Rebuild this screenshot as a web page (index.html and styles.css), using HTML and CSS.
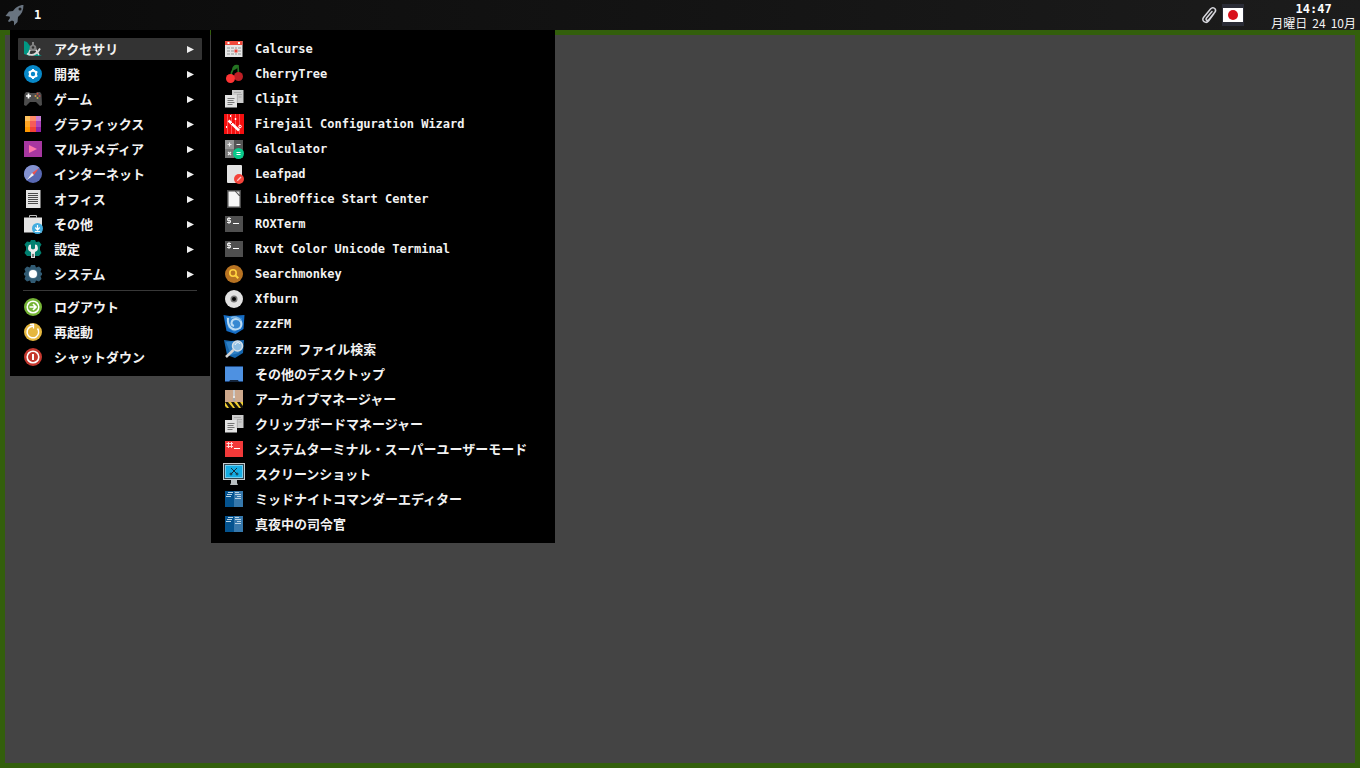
FILE: index.html
```html
<!DOCTYPE html>
<html lang="ja">
<head>
<meta charset="utf-8">
<title>デスクトップ</title>
<link rel="stylesheet" href="styles.css">
</head>
<body>
<svg class="sprites" aria-hidden="true">
  <defs>
    <symbol id="arrow" viewBox="0 0 7 7"><path d="M0 0L7 3.5L0 7Z" fill="#eee"/></symbol>
    <symbol id="clip" viewBox="0 0 22 22">
      <path d="M9 2h11.500v13H9z" fill="#ccc"/><path d="M11 4.500h7M14 6.500h5M15.500 9h3" stroke="#aaa"/>
      <path d="M2 7h12v12.500H2z" fill="#e2e2e2"/><path d="M14.300 7v8" stroke="#999" stroke-width=".6"/>
      <path d="M4.500 10.500h7M4.500 12.500h6M4.500 14.500h7M4.500 16.500h5" stroke="#777"/>
    </symbol>
    <symbol id="term" viewBox="0 0 22 22">
      <path d="M2 3h18v16H2z" fill="#4f4f4f"/>
      <path d="M8 5.500H4.500v2H7.500v2H4M6 4v7" fill="none" stroke="#eee"/><path d="M10 10.500h6" stroke="#fff"/>
    </symbol>
    <symbol id="book" viewBox="0 0 22 22">
      <path d="M2 3h9v16H2z" fill="#04538f"/><path d="M11 3h9v16h-9z" fill="#3678ac"/>
      <path d="M5 4.500h5M4 6.500h5M3 8.500h5M12 4.500h4M12 6.500h6M14 8.500h4M12 10.500h6" stroke="#b7d2e4" stroke-width="1.200"/>
    </symbol>
  </defs>
</svg>

<header class="panel">
  <div class="panel-left">
    <button class="launcher" aria-label="メニュー">
      <svg viewBox="0 0 22 22" width="22" height="22"><path d="M19.500 1C15 1 11.500 3.500 9 7L5 7.500 1.500 12l4 .500.500 1.500-2 3 1 1 3-1.500 2 1 0 4 3.500-3.500.500-5C17.500 10.500 19.500 6.500 19.500 1Z" fill="#697480"/><circle cx="16" cy="5" r="1.500" fill="#161616"/></svg>
    </button>
    <button class="workspace">1</button>
  </div>
  <div class="panel-right">
    <button class="tray" aria-label="クリップボード">
      <svg viewBox="0 0 18 22" width="18" height="22"><g fill="none" stroke="#d6d6dc" stroke-width="1.500" stroke-linecap="round"><path d="M14 9.500L8.500 17C6 20 1 17 3.500 13.500L10.500 5C13 2 17 5 15 8L9 15.500C7.500 17.500 5 16 6.500 14L12 7.500"/></g></svg>
    </button>
    <button class="flag" aria-label="日本語">
      <svg viewBox="0 0 22 22" width="22" height="22"><path d="M1 4h20v14H1z" fill="#fff"/><circle cx="11" cy="11" r="5" fill="#d8101b"/></svg>
    </button>
    <div class="clock">
      <time class="time">14:47</time>
      <div class="date"><span>月曜日</span><span>24</span><span>10月</span></div>
    </div>
  </div>
</header>

<main class="desktop">
  <nav class="menus" aria-label="アプリケーション">
    <div class="menu root">
      <button class="item active"><svg class="icon" viewBox="0 0 22 22"><path d="M2 3l3 1 3 4v10l-6-2z" fill="#009783"/><path d="M13 15l7 3h-8z" fill="#009783"/><path d="M11 4v4" stroke="#858585" stroke-width="2"/><path d="M8 8l3-2 3 2 1 5H7z" fill="#828282"/><circle cx="11" cy="9.500" r="1.200" fill="#303030"/><path d="M8 12l-2 5M14 12l3 5" stroke="#ddd" stroke-width="1.500"/><path d="M5 15.500c5 3 10 1 13-5" fill="none" stroke="#d8d8d8" stroke-width="1.700"/></svg><span class="label">アクセサリ</span><svg class="arrow"><use href="#arrow"/></svg></button>
      <button class="item"><svg class="icon" viewBox="0 0 22 22"><circle cx="11" cy="11" r="9" fill="#0788c8"/><circle cx="11" cy="11" r="3.200" fill="none" stroke="#fff" stroke-width="2"/><path d="M11 6v2M11 14v2M6.700 8.500l1.500 1M13.800 12.500l1.500 1M6.700 13.500l1.500-1M13.800 9.500l1.500-1" stroke="#fff" stroke-width="2"/></svg><span class="label">開発</span><svg class="arrow"><use href="#arrow"/></svg></button>
      <button class="item"><svg class="icon" viewBox="0 0 22 22"><path d="M4 4h3l1 1h6l1-1h3l1.500 2L20 17l-2 1-4-4H8l-4 4-2-1L2.500 6z" fill="#4d4d4d"/><path d="M4 8h5M6.500 5.500v5" stroke="#fff" stroke-width="1.700"/><circle cx="15.500" cy="5.800" r="1" fill="#c95040"/><circle cx="13.500" cy="8" r="1" fill="#d99b45"/><circle cx="17.500" cy="8" r="1" fill="#c94848"/><circle cx="15.500" cy="10" r="1" fill="#b9b34b"/></svg><span class="label">ゲーム</span><svg class="arrow"><use href="#arrow"/></svg></button>
      <button class="item"><svg class="icon" viewBox="0 0 22 22"><path d="M3 3h5v5H3z" fill="#ffc15e"/><path d="M3 8h5v6H3z" fill="#ffa523"/><path d="M3 14h5v5H3z" fill="#ff9800"/><path d="M8 3h6v5H8z" fill="#ff8b68"/><path d="M8 8h6v6H8z" fill="#f55c58"/><path d="M8 14h6v5H8z" fill="#f44336"/><path d="M14 3h5v5h-5z" fill="#c880d4"/><path d="M14 8h5v6h-5z" fill="#ac45bc"/><path d="M14 14h5v5h-5z" fill="#9423a8"/></svg><span class="label">グラフィックス</span><svg class="arrow"><use href="#arrow"/></svg></button>
      <button class="item"><svg class="icon" viewBox="0 0 22 22"><path d="M2 3h18v16H2z" fill="#a737a0"/><path d="M7 7l8 4-8 4z" fill="#ff77aa"/></svg><span class="label">マルチメディア</span><svg class="arrow"><use href="#arrow"/></svg></button>
      <button class="item"><svg class="icon" viewBox="0 0 22 22"><circle cx="11" cy="11" r="9" fill="#5868b3"/><path d="M17.400 4.600A9 9 0 0 0 4.600 17.400Z" fill="#8492d0"/><path d="M17 5l-5 7-2-2z" fill="#ef5350"/><path d="M5 17l5-7 2 2z" fill="#eee"/></svg><span class="label">インターネット</span><svg class="arrow"><use href="#arrow"/></svg></button>
      <button class="item"><svg class="icon" viewBox="0 0 22 22"><path d="M4 2h14.500v18H4z" fill="#e4e4e4"/><path d="M6 5.500h10M6 7.500h10M6 9.500h10M6 11.500h10M6 13.500h10M6 15.500h10" stroke="#4c4c4c"/></svg><span class="label">オフィス</span><svg class="arrow"><use href="#arrow"/></svg></button>
      <button class="item"><svg class="icon" viewBox="0 0 22 22"><path d="M7.500 4.500V2.500h7v2" fill="none" stroke="#bbb"/><path d="M2 4.500h18v15H2z" fill="#e4e4e4"/><circle cx="15.500" cy="15.500" r="5.500" fill="#43addf"/><path d="M15.500 12v4M13.300 14.500l2.200 2.500 2.200-2.500M12.800 18.500h5.400" fill="none" stroke="#fff" stroke-width="1.200"/></svg><span class="label">その他</span><svg class="arrow"><use href="#arrow"/></svg></button>
      <button class="item"><svg class="icon" viewBox="0 0 22 22"><path d="M9 2h4l1 2 3-.5 2.500 3L18 9v3l1.500 3-2.500 3H5l-2.500-3L4 12V9L2.500 6.500l2.500-3 3 .5z" fill="#008070"/><path d="M7 7c-2 4-.500 6 2 7v4h4v-4c2.500-1 4-3 2-7l-2-.500v4L11 11.500 9 10.500v-4z" fill="#eee"/><path d="M9 15h4v5H9z" fill="#ddd"/><path d="M10 16h2v3h-2z" fill="#777"/></svg><span class="label">設定</span><svg class="arrow"><use href="#arrow"/></svg></button>
      <button class="item"><svg class="icon" viewBox="0 0 22 22"><path d="M9 2h4l1 2.500 3-1L19.500 6 18.500 9l1.500 1v2l-1.500 1 1 3-2.500 2.500-3-1L13 20H9l-1-2.500-3 1L2.500 16l1-3L2 12v-2l1.500-1-1-3L5 3.500l3 1z" fill="#315b73"/><circle cx="11" cy="11" r="4.800" fill="#547890"/><circle cx="11" cy="11" r="4" fill="#fff"/></svg><span class="label">システム</span><svg class="arrow"><use href="#arrow"/></svg></button>
      <hr class="rule">
      <button class="item"><svg class="icon" viewBox="0 0 22 22"><circle cx="11" cy="11" r="9" fill="#76b536"/><circle cx="11" cy="11" r="5.800" fill="none" stroke="#fff" stroke-width="1.500"/><path d="M7.500 11h6M11 8l3 3-3 3" fill="none" stroke="#fff" stroke-width="1.700"/></svg><span class="label">ログアウト</span></button>
      <button class="item"><svg class="icon" viewBox="0 0 22 22"><circle cx="11" cy="11" r="9" fill="#e5b73f"/><path d="M15.500 7.500A5.800 5.800 0 1 1 8 6L11 5" fill="none" stroke="#fff" stroke-width="1.500"/><path d="M8 3.500h3.500v4" fill="none" stroke="#fff" stroke-width="1.300"/></svg><span class="label">再起動</span></button>
      <button class="item"><svg class="icon" viewBox="0 0 22 22"><circle cx="11" cy="11" r="9" fill="#c5382f"/><circle cx="11" cy="11" r="5.800" fill="none" stroke="#fff" stroke-width="1.600"/><path d="M11 8v6" stroke="#fff" stroke-width="2"/></svg><span class="label">シャットダウン</span></button>
    </div>

    <div class="menu sub">
      <button class="item"><svg class="icon" viewBox="0 0 22 22"><path d="M2 3h17.500v16H2z" fill="#e6e6e6"/><path d="M2 3h17.500v4H2z" fill="#f04a3c"/><path d="M4.500 4h2v2h-2zM15 4h2v2h-2z" fill="#fff"/><path d="M4 9h3v2H4zM8 9h3v2H8zM12 9h2v2h-2zM15 9h3v2h-3zM4 12h3v2H4zM8 12h3v2H8zM15 12h3v2h-3zM4 15h3v2H4zM8 15h3v2H8zM12 15h2v2h-2zM15 15h3v2h-3z" fill="#bdbdbd"/><path d="M11.500 11.500h3v3h-3z" fill="#ed4238"/></svg><span class="label mono">Calcurse</span></button>
      <button class="item"><svg class="icon" viewBox="0 0 22 22"><path d="M8 13c0-5 3-9 7-10 0 3 1 6 0 9" fill="none" stroke="#247422" stroke-width="1.700"/><path d="M9 7c0-4 3-6 6-5 0 3-2 5-6 5z" fill="#247422"/><circle cx="15.500" cy="13.500" r="4.500" fill="#bd1f25"/><circle cx="7.500" cy="15.500" r="4.500" fill="#ff3434"/></svg><span class="label mono">CherryTree</span></button>
      <button class="item"><svg class="icon"><use href="#clip"/></svg><span class="label mono">ClipIt</span></button>
      <button class="item"><svg class="icon" viewBox="0 0 22 22"><path d="M1 1h20v20H1z" fill="#f40f0f"/><path d="M4.500 1v20M8.500 1v20M12.500 1v20M16.500 1v20" stroke="#ff7373" stroke-width=".7"/><path d="M5.500 7.500l10.500 10" stroke="#fff" stroke-width="2.500"/><path d="M8 11l2.500-2.500" stroke="#f40f0f"/><circle cx="17" cy="13.500" r="1.300" fill="none" stroke="#fff"/><path d="M7.500 2v2M12.500 5v2M11.500 6h2M3.500 13v2" stroke="#fff"/></svg><span class="label mono">Firejail Configuration Wizard</span></button>
      <button class="item"><svg class="icon" viewBox="0 0 22 22"><path d="M2 2h9v9H2z" fill="#969696"/><path d="M11 2h9v9h-9z" fill="#555"/><path d="M2 11h9v9H2z" fill="#777"/><path d="M11 11h9v9h-9z" fill="#444"/><path d="M4.500 6.500h4M6.500 4.500v4M13.500 6.500h4M5 14l3 3M8 14l-3 3" stroke="#eee" stroke-width="1.200"/><circle cx="15.500" cy="15.500" r="5.500" fill="#08c98a"/><path d="M13.500 14.500h4M13.500 16.500h4" stroke="#fff"/></svg><span class="label mono">Galculator</span></button>
      <button class="item"><svg class="icon" viewBox="0 0 22 22"><rect x="4" y="2" width="15" height="18" rx="1" fill="#e4e4e4"/><circle cx="16" cy="16" r="5" fill="#f4433a"/><path d="M13.500 18.500l1-2 3-3 1 1-3 3z" fill="#ffc8c4"/></svg><span class="label mono">Leafpad</span></button>
      <button class="item"><svg class="icon" viewBox="0 0 22 22"><path d="M4 2h14v18H4z" fill="#4b4b4b"/><path d="M5.500 3.500H12l4.500 5v10h-11z" fill="#f6f6f6"/><path d="M13 3.500h3.500V7z" fill="#ddd"/></svg><span class="label mono">LibreOffice Start Center</span></button>
      <button class="item"><svg class="icon"><use href="#term"/></svg><span class="label mono">ROXTerm</span></button>
      <button class="item"><svg class="icon"><use href="#term"/></svg><span class="label mono">Rxvt Color Unicode Terminal</span></button>
      <button class="item"><svg class="icon" viewBox="0 0 22 22"><circle cx="11" cy="11" r="9" fill="#b87322"/><circle cx="10" cy="10" r="3.200" fill="none" stroke="#ffd23f" stroke-width="1.600"/><path d="M12.300 12.300l3 3" stroke="#ffd23f" stroke-width="2"/></svg><span class="label mono">Searchmonkey</span></button>
      <button class="item"><svg class="icon" viewBox="0 0 22 22"><circle cx="11" cy="11" r="9" fill="#e2e2e2"/><circle cx="11" cy="11" r="3.500" fill="#777"/><circle cx="11" cy="11" r="2" fill="#050505"/></svg><span class="label mono">Xfburn</span></button>
      <button class="item"><svg class="icon" viewBox="0 0 22 22"><path d="M.500 2l6 1L21.500 2l-1 14-8 5-9-3z" fill="#156cc4"/><path d="M3 4l8-1 8 2-1 10-7 4-6-4z" fill="#3688d2"/><path d="M5 5c-1 9 5 14 12 10 3-4 1-9-4-9-5 0-6 6-2 7" fill="none" stroke="#bcdcf4" stroke-width="2"/><path d="M8 5c3-2 8-1 10 3" fill="none" stroke="#82b9e6" stroke-width="1.500"/></svg><span class="label mono">zzzFM</span></button>
      <button class="item"><svg class="icon" viewBox="0 0 22 22"><path d="M1 2l7 1 13-1-1 13-8 5-8-3z" fill="#1565ac"/><path d="M3 4l8-1 7 2-2 10-8 2z" fill="#2e7fc4"/><circle cx="14.500" cy="8" r="5" fill="#8fbfe3" stroke="#d5dfe7" stroke-width="1.500"/><path d="M12 7c1-3 4-3 5-1" fill="none" stroke="#f7fbff"/><path d="M10.500 12L3 19" stroke="#d5d5d5" stroke-width="2.500"/></svg><span class="label"><span class="mono">zzzFM </span>ファイル検索</span></button>
      <button class="item"><svg class="icon" viewBox="0 0 22 22"><path d="M2 3h18v16H2z" fill="#4e91e1"/><path d="M2 3h18v1H2zM2 18h18v1H2z" fill="#1d477f"/><path d="M7 17h8l1 2H6z" fill="#14243a"/></svg><span class="label">その他のデスクトップ</span></button>
      <button class="item"><svg class="icon" viewBox="0 0 22 22"><path d="M2 2h18v12H2z" fill="#cda88c"/><path d="M2 14h18v6H2z" fill="#f0ce30"/><path d="M2 14h3l5 6H6zM8 14h3l5 6h-4zM14 14h3l3 4v2h-2zM2 18l2 2H2z" fill="#15130e"/><path d="M11 2v9" stroke="#e8e8e8" stroke-width="2"/><path d="M10 3h2M10 5h2M10 7h2" stroke="#999" stroke-width=".7"/><path d="M10 10h2v3h-2z" fill="#aaa"/></svg><span class="label">アーカイブマネージャー</span></button>
      <button class="item"><svg class="icon"><use href="#clip"/></svg><span class="label">クリップボードマネージャー</span></button>
      <button class="item"><svg class="icon" viewBox="0 0 22 22"><path d="M2 3h18v16H2z" fill="#f23939"/><path d="M5.500 4v6M8.500 4v6M3.500 5.500h6.500M3.500 8.500h6.500" stroke="#ffdada"/><path d="M11 10.500h6" stroke="#fff"/></svg><span class="label">システムターミナル・スーパーユーザーモード</span></button>
      <button class="item"><svg class="icon" viewBox="0 0 22 22"><path d="M8 16h6v4l1 2H7l1-2z" fill="#b8bec1"/><path d="M0 0h22v17H0z" fill="#c4cbce"/><path d="M1 1h20v15H1z" fill="#30434e"/><path d="M2 2h18v13H2z" fill="#16ade4"/><path d="M2.500 2.500h17v12h-17z" fill="none" stroke="#d4f3ff" stroke-dasharray="1 1"/><path d="M8 5l6 6M14 5l-6 6" stroke="#17323f"/><circle cx="8" cy="11" r="1" fill="none" stroke="#17323f"/><circle cx="14" cy="11" r="1" fill="none" stroke="#17323f"/></svg><span class="label">スクリーンショット</span></button>
      <button class="item"><svg class="icon"><use href="#book"/></svg><span class="label">ミッドナイトコマンダーエディター</span></button>
      <button class="item"><svg class="icon"><use href="#book"/></svg><span class="label">真夜中の司令官</span></button>
    </div>
  </nav>
</main>
</body>
</html>
```
FILE: styles.css
```css
* { box-sizing: border-box; }

body {
  margin: 0;
  min-height: 100vh;
  display: flex;
  flex-direction: column;
  background: #444;
  color: #f2f2f2;
  font: 500 13px/22px "Noto Sans CJK JP", sans-serif;
}

button {
  margin: 0;
  padding: 0;
  border: 0;
  background: none;
  color: inherit;
  font: inherit;
  text-align: left;
}

.sprites { position: absolute; width: 0; height: 0; }

.panel {
  height: 30px;
  display: flex;
  justify-content: space-between;
  align-items: center;
  padding: 0 4px;
  background: linear-gradient(90deg, #0b0b0b, #1c1c1c);
}

.panel-left, .panel-right { display: flex; align-items: center; }
.panel-left { gap: 8px; }
.launcher, .tray, .flag { display: flex; }
.workspace, .time { font: bold 12px/16px "DejaVu Sans Mono", monospace; color: #fff; }
.tray { margin-right: 4px; }
.flag { margin-right: 27px; background: #2a2c36; }

.clock { display: flex; flex-direction: column; align-items: center; }
.date {
  display: flex;
  gap: 5px;
  font-size: 12px;
  line-height: 12px;
  font-weight: 400;
}

.desktop {
  position: relative;
  flex: 1;
  border: 5px solid #335f0c;
  background: #444;
}

.menus {
  position: absolute;
  top: -5px;
  left: 5px;
  display: flex;
  align-items: flex-start;
  gap: 1px;
}

.menu {
  display: flex;
  flex-direction: column;
  gap: 3px;
  padding: 8px;
  background: #000;
}
.root { width: 200px; }
.sub { width: 344px; }

.item {
  display: flex;
  align-items: center;
  gap: 10px;
  height: 22px;
  padding: 0 8px 0 4px;
  white-space: nowrap;
  font-weight: 700;
}
.active { background: #333; border-radius: 1px; }

.icon { width: 22px; height: 22px; flex: none; }
.label { flex: 1; }
.mono { font: bold 12px/22px "DejaVu Sans Mono", monospace; white-space: pre; }
.label.mono { line-height: 24px; }
.arrow { width: 7px; height: 7px; flex: none; }

.rule {
  width: 174px;
  height: 1px;
  margin: 2px 5px;
  border: 0;
  background: #383838;
}
```
